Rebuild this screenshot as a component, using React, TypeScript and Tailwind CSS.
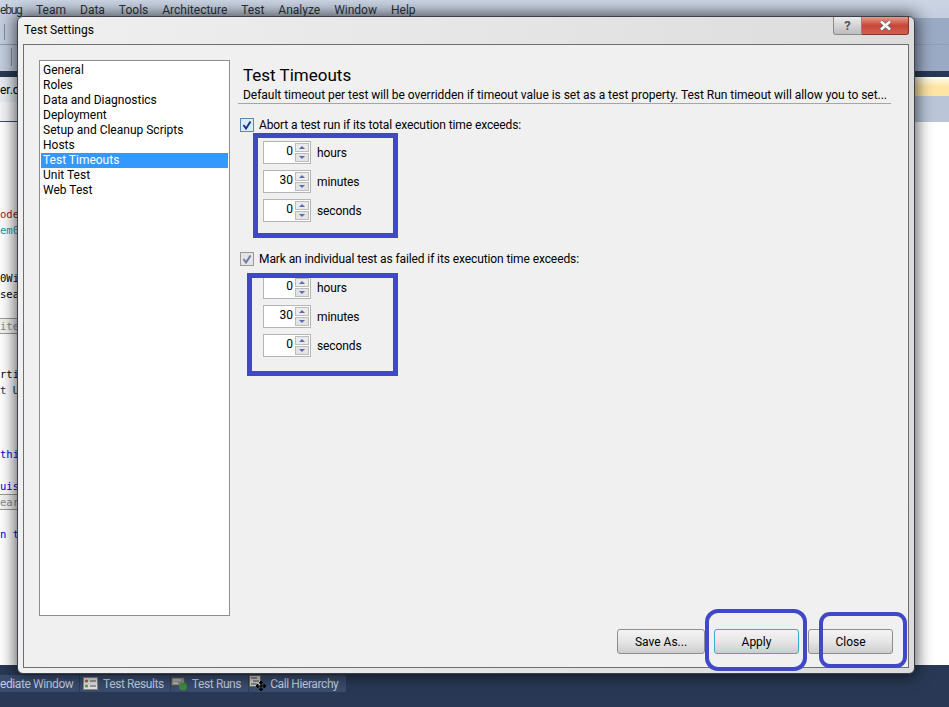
import React from "react";

const font = "font-['Roboto','Noto_Sans',sans-serif]";

const sections = [
  "General",
  "Roles",
  "Data and Diagnostics",
  "Deployment",
  "Setup and Cleanup Scripts",
  "Hosts",
  "Test Timeouts",
  "Unit Test",
  "Web Test",
];

const menu = ["Team", "Data", "Tools", "Architecture", "Test", "Analyze", "Window", "Help"];

// code lines that peek out left of the dialog
const codeRows: { text: string; color: string; boxed?: boolean }[] = [
  { text: "ode", color: "text-[#a31515]" },
  { text: "em0", color: "text-[#2b91af]" },
  { text: "", color: "" },
  { text: "", color: "" },
  { text: "0Wi", color: "text-black" },
  { text: "sea", color: "text-black" },
  { text: "", color: "" },
  { text: "ite", color: "text-[#8a8a8a]", boxed: true },
  { text: "", color: "" },
  { text: "", color: "" },
  { text: "rti", color: "text-black" },
  { text: "t U", color: "text-[#10304a]" },
  { text: "", color: "" },
  { text: "", color: "" },
  { text: "", color: "" },
  { text: "thi", color: "text-[#0000dd]" },
  { text: "", color: "" },
  { text: "uis", color: "text-[#0000dd]" },
  { text: "ear", color: "text-[#8a8a8a]", boxed: true },
  { text: "", color: "" },
  { text: "n t", color: "text-[#0000dd]" },
];

const Spinner = ({ value, label, clip }: { value: string; label: string; clip?: boolean }) => (
  <div className={`flex h-[23px] flex-none items-center ${clip ? "-mt-[2px]" : ""}`}>
    <div className="flex h-[23px] w-[48px] items-center border border-[#b5b5b5] bg-white pr-px">
      <span className="flex-1 pb-[4px] pr-[2px] text-right text-[12px] leading-none text-black">{value}</span>
      <div className="flex h-[19px] w-[14px] flex-col gap-px">
        <div className="flex flex-1 items-center justify-center border border-[#bcbcbc] bg-[#ebebeb]">
          <div className="h-0 w-0 border-x-[3px] border-b-[3px] border-x-transparent border-b-[#5b6bb0]" />
        </div>
        <div className="flex flex-1 items-center justify-center border border-[#bcbcbc] bg-[#e4e4e4]">
          <div className="h-0 w-0 border-x-[3px] border-t-[3px] border-x-transparent border-t-[#5b6bb0]" />
        </div>
      </div>
    </div>
    <span className="ml-[6px] text-[12px] tracking-[-0.1px] text-black">{label}</span>
  </div>
);

const Check = ({ dim }: { dim?: boolean }) => (
  <div className={`flex h-[14px] w-[14px] flex-none items-center justify-center border ${dim ? "border-[#9a9a9a] bg-[#e4e4e4]" : "border-[#5b87b4] bg-[#d8ecfa]"}`}>
    <svg width="10" height="10" viewBox="0 0 10 10">
      <path d="M1.5 5 L4 8.5 L8.5 1.5" fill="none" stroke={dim ? "#6a78a8" : "#1c2f8a"} strokeWidth="1.9" />
    </svg>
  </div>
);

const Btn = ({ label, w, focus }: { label: string; w: string; focus?: boolean }) => (
  <div
    className={`flex h-[25px] ${w} items-center justify-center rounded-[3px] border bg-gradient-to-b from-[#f4f4f4] via-[#e6e6e6] to-[#cdcdcd] text-[12px] text-black ${
      focus ? "border-[#3fa9d6]" : "border-[#8e8e8e]"
    }`}
  >
    {label}
  </div>
);

const TabIconResults = () => (
  <svg width="15" height="13" viewBox="0 0 15 13" className="flex-none">
    <rect x="0.5" y="0.5" width="14" height="12" fill="#e4e4e4" stroke="#8a8a8a" />
    <circle cx="3.5" cy="4" r="1.6" fill="#c8503c" />
    <circle cx="3.5" cy="9" r="1.6" fill="#5aa040" />
    <path d="M7 4h6M7 9h6" stroke="#555" strokeWidth="1.2" />
  </svg>
);

const TabIconRuns = () => (
  <svg width="17" height="14" viewBox="0 0 17 14" className="flex-none">
    <rect x="0.5" y="0.5" width="13" height="8" fill="#8c8c8c" stroke="#555" />
    <path d="M2 3h8M2 6h5" stroke="#dcdcdc" />
    <circle cx="12" cy="9.5" r="4" fill="#3f8a3f" />
  </svg>
);

const TabIconCalls = () => (
  <svg width="18" height="17" viewBox="0 0 18 17" className="flex-none">
    <rect x="0.5" y="0.5" width="11" height="11" fill="#d8d2b8" stroke="#6a6a5a" />
    <path d="M2 3h6M4 6h6M2 9h6" stroke="#2a3f90" strokeWidth="1.2" />
    <path d="M12 6v10M7 11h10M12 6l-2 2h4zM12 16l-2-2h4zM7 11l2-2v4zM17 11l-2-2v4z" stroke="#000" fill="#000" strokeWidth="1" />
  </svg>
);

export default function App() {
  return (
    <div className={`relative flex h-[707px] w-[949px] flex-col overflow-hidden bg-white ${font}`}>
      {/* IDE behind the dialog */}
      <div className="flex h-[18px] flex-none items-center bg-gradient-to-b from-[#ccd5e4] to-[#c4cedf] text-[12px] text-[#2a3340]">
        <div className="flex gap-[14px] pt-[1px]">
          <span className="mr-px w-[21px] tracking-[-1.2px]">ebug</span>
          {menu.map((m) => (
            <span key={m}>{m}</span>
          ))}
        </div>
      </div>
      <div className="flex h-[53px] flex-none flex-col bg-[#9aa9c4]">
        <div className="h-[27px] border-b border-[#8d9cb8] bg-gradient-to-r from-[#c3cddd] via-[#aab7cd] to-[#9aa9c4] pl-[4px] pt-[6px]">
          <div className="h-[16px] w-px bg-[#7f8da8]" />
        </div>
        <div className="flex-1 bg-gradient-to-r from-[#c3cddd] via-[#aab7cd] to-[#9aa9c4] pl-[11px] pt-[3px]">
          <div className="h-[18px] w-px bg-[#7f8da8]" />
        </div>
      </div>
      <div className="h-[6px] flex-none bg-[#293955]" />
      <div className="flex h-[45px] flex-none flex-col bg-[#bac6d8]">
        <div className="h-[19px] bg-gradient-to-b from-[#fffdf2] via-[#fde5a4] to-[#fde5a4]">
          <div className="flex h-[25px] w-[17px] items-center whitespace-nowrap bg-[#e8ecf2] text-[12px] text-black">er.cs</div>
        </div>
        <div className="mt-[6px] h-[20px] w-[17px] border-b border-[#3a4a68] bg-[#f2f4f8]" />
      </div>
      <div className="h-[84px] flex-none bg-white" />
      <div className="flex-1 bg-white font-['DejaVu_Sans_Mono',monospace] text-[10.5px] leading-[16px]">
        {codeRows.map((r, i) => (
          <div key={i} className={`h-[16px] w-[17px] whitespace-nowrap ${r.color} ${r.boxed ? "border-y border-[#9a9a9a] bg-[#f4f4f4] leading-[14px]" : ""}`}>
            {r.text}
          </div>
        ))}
      </div>
      <div className="flex h-[42px] flex-none flex-col bg-[#293955] pt-[10px]">
        <div className="flex h-[17px] w-[346px] items-center gap-[2px] whitespace-nowrap bg-[#3a4d6e] text-[12px] tracking-[-0.4px] text-[#c3cfe0]">
          <span className="w-[77px] flex-none">ediate Window</span>
          <span className="flex flex-none items-center gap-[5px] border-l border-[#2c3c58] pl-[3px] pr-[4px]">
            <TabIconResults />
            Test Results
          </span>
          <span className="flex flex-none items-center gap-[4px] border-l border-[#2c3c58] pr-[5px]">
            <TabIconRuns />
            Test Runs
          </span>
          <span className="flex flex-none items-center gap-[3px] border-l border-[#2c3c58]">
            <TabIconCalls />
            Call Hierarchy
          </span>
        </div>
      </div>

      {/* Test Settings dialog */}
      <div className="absolute left-[17px] top-[16px] flex h-[658px] w-[898px] flex-col rounded-[6px] border border-[#3c4048] bg-gradient-to-r from-[#f0f0f0] to-[#dcdcdc] shadow-[0_0_16px_2px_rgba(0,0,0,0.65)]">
        <div className="relative flex h-[27px] flex-none items-center pb-[2px] pl-[6px] text-[12px] text-black">
          Test Settings
          <div className="absolute right-[5px] top-0 flex h-[18px]">
            <div className="flex w-[29px] items-center justify-center rounded-bl-[3px] border border-t-0 border-[#8a8a8a] bg-gradient-to-b from-[#ececec] to-[#bdbdbd] text-[13px] font-bold leading-none text-[#555]">
              ?
            </div>
            <div className="flex w-[47px] items-center justify-center rounded-br-[3px] border border-t-0 border-l-0 border-[#8a3030] bg-gradient-to-b from-[#e49a8a] via-[#c8453a] to-[#d0604e]">
              <svg width="13" height="11" viewBox="0 0 13 11">
                <path d="M2 1.5 L11 9.5 M11 1.5 L2 9.5" stroke="#6a6a6a" strokeWidth="4" />
                <path d="M2 1.5 L11 9.5 M11 1.5 L2 9.5" stroke="#ffffff" strokeWidth="2.4" />
              </svg>
            </div>
          </div>
        </div>
        <div className="mx-[5px] mb-[5px] flex flex-1 flex-col border border-[#6e6e6e] bg-[#f0f0f0]">
          <div className="flex pl-[15px] pr-[17px] pt-[15px]">
            <div className="h-[556px] w-[191px] flex-none border border-[#8e8e8e] bg-white py-[2px] text-[12px] leading-[15px] text-black">
              {sections.map((s) => (
                <div key={s} className={`mx-px pl-[2px] ${s === "Test Timeouts" ? "bg-[#3399ff] text-white" : ""}`}>
                  {s}
                </div>
              ))}
            </div>
            <div className="ml-[8px] min-w-0 flex-1">
              <div className="pl-[5px] pt-[3px] text-[17px] leading-[24px] text-black">Test Timeouts</div>
              <div className="overflow-hidden whitespace-nowrap border-b border-[#a5a5a5] pl-[5px] text-[12px] leading-[16px] tracking-[-0.03px] text-black">
                Default timeout per test will be overridden if timeout value is set as a test property. Test Run timeout will allow you to set...
              </div>
              <div className="ml-[2px] mt-[13px] flex h-[16px] items-center gap-[5px] text-[12px] tracking-[-0.1px] text-black">
                <Check />
                Abort a test run if its total execution time exceeds:
              </div>
              <div className="ml-[15px] flex h-[105px] w-[145px] flex-col gap-[6px] border-[5px] border-[#4048c8] pl-[5px] pt-[3px]">
                <Spinner value="0" label="hours" />
                <Spinner value="30" label="minutes" />
                <Spinner value="0" label="seconds" />
              </div>
              <div className="ml-[2px] mt-[13px] flex h-[16px] items-center gap-[5px] text-[12px] tracking-[-0.1px] text-black">
                <Check dim />
                Mark an individual test as failed if its execution time exceeds:
              </div>
              <div className="ml-[9px] mt-[6px] flex h-[103px] w-[151px] flex-col gap-[6px] overflow-hidden border-[5px] border-[#4048c8] pl-[11px]">
                <Spinner value="0" label="hours" clip />
                <Spinner value="30" label="minutes" />
                <Spinner value="0" label="seconds" />
              </div>
            </div>
          </div>
          <div className="flex justify-end gap-[9px] pr-[15px] pt-[13px]">
            <Btn label="Save As..." w="w-[88px]" />
            <Btn label="Apply" w="w-[85px]" focus />
            <Btn label="Close" w="w-[85px]" />
          </div>
        </div>
      </div>

      {/* hand drawn marks over the buttons */}
      <div className="absolute left-[705px] top-[609px] h-[62px] w-[102px] rounded-[13px] border-[4px] border-[#4048c8]" />
      <div className="absolute left-[819px] top-[612px] h-[56px] w-[88px] rounded-[11px] border-[4px] border-[#4048c8]" />
    </div>
  );
}
